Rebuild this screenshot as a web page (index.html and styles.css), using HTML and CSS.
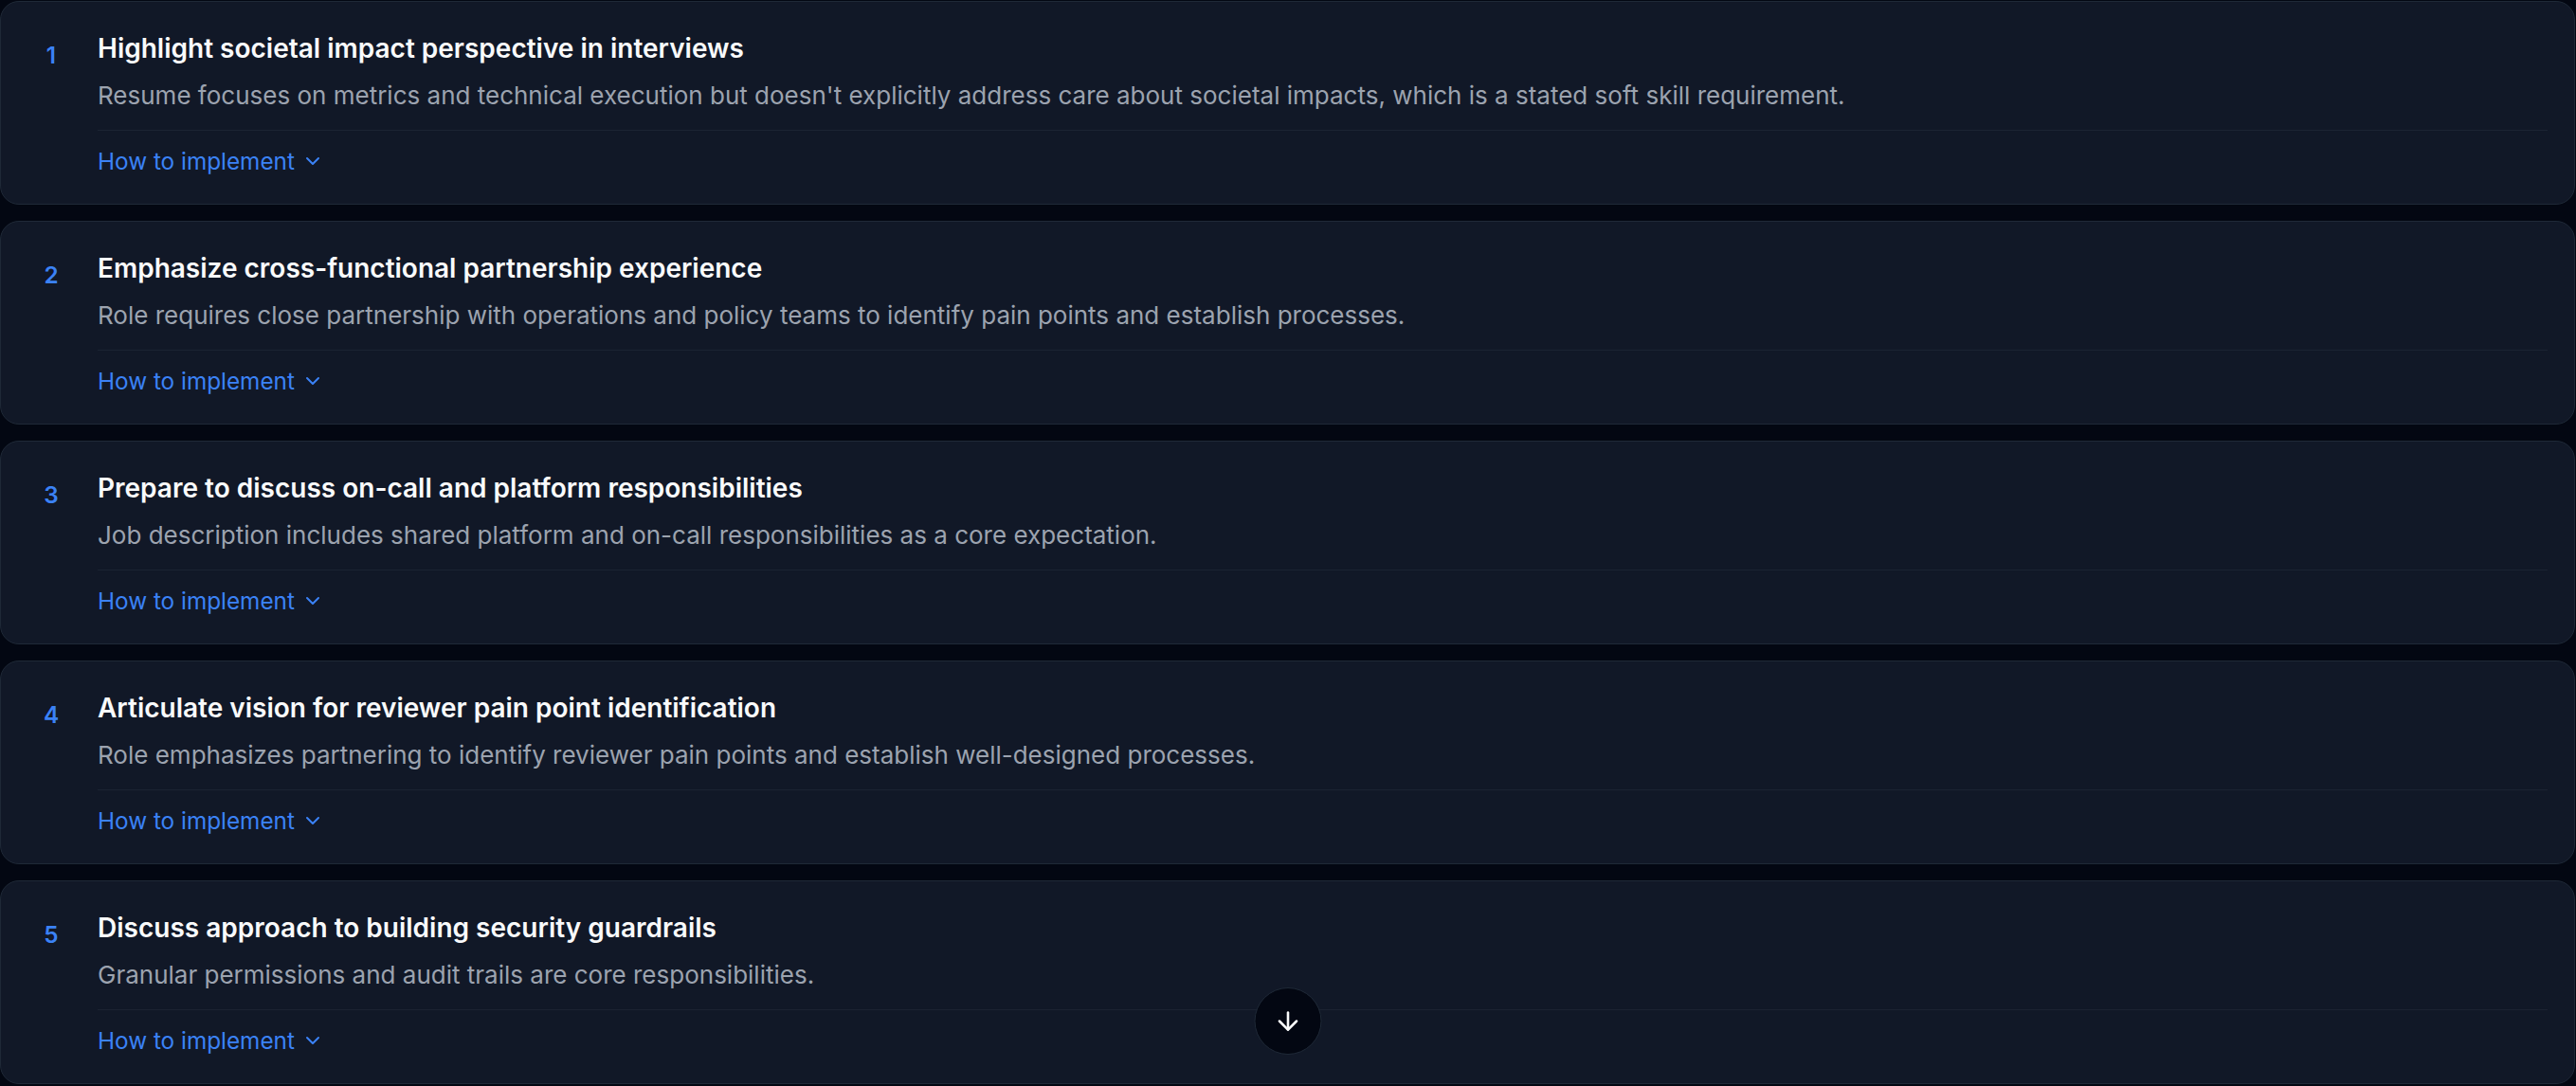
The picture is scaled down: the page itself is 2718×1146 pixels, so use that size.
FILE: index.html
```html
<!DOCTYPE html>
<html lang="en">
<head>
  <meta charset="UTF-8">
  <meta name="viewport" content="width=device-width, initial-scale=1.0">
  <title>Recommendations</title>
  <link rel="stylesheet" href="styles.css">
</head>
<body>
  <div class="list">
    <div class="card">
      <div class="num">1</div>
      <div class="body">
        <h3>Highlight societal impact perspective in interviews</h3>
        <p>Resume focuses on metrics and technical execution but doesn't explicitly address care about societal impacts, which is a stated soft skill requirement.</p>
        <div class="foot">
          <button class="toggle">How to implement
            <svg viewBox="0 0 24 24" fill="none" stroke="currentColor" stroke-width="2" stroke-linecap="round" stroke-linejoin="round"><path d="m6 9 6 6 6-6"/></svg>
          </button>
        </div>
      </div>
    </div>
    <div class="card">
      <div class="num">2</div>
      <div class="body">
        <h3>Emphasize cross-functional partnership experience</h3>
        <p>Role requires close partnership with operations and policy teams to identify pain points and establish processes.</p>
        <div class="foot">
          <button class="toggle">How to implement
            <svg viewBox="0 0 24 24" fill="none" stroke="currentColor" stroke-width="2" stroke-linecap="round" stroke-linejoin="round"><path d="m6 9 6 6 6-6"/></svg>
          </button>
        </div>
      </div>
    </div>
    <div class="card">
      <div class="num">3</div>
      <div class="body">
        <h3>Prepare to discuss on-call and platform responsibilities</h3>
        <p>Job description includes shared platform and on-call responsibilities as a core expectation.</p>
        <div class="foot">
          <button class="toggle">How to implement
            <svg viewBox="0 0 24 24" fill="none" stroke="currentColor" stroke-width="2" stroke-linecap="round" stroke-linejoin="round"><path d="m6 9 6 6 6-6"/></svg>
          </button>
        </div>
      </div>
    </div>
    <div class="card">
      <div class="num">4</div>
      <div class="body">
        <h3>Articulate vision for reviewer pain point identification</h3>
        <p>Role emphasizes partnering to identify reviewer pain points and establish well-designed processes.</p>
        <div class="foot">
          <button class="toggle">How to implement
            <svg viewBox="0 0 24 24" fill="none" stroke="currentColor" stroke-width="2" stroke-linecap="round" stroke-linejoin="round"><path d="m6 9 6 6 6-6"/></svg>
          </button>
        </div>
      </div>
    </div>
    <div class="card">
      <div class="num">5</div>
      <div class="body">
        <h3>Discuss approach to building security guardrails</h3>
        <p>Granular permissions and audit trails are core responsibilities.</p>
        <div class="foot">
          <button class="toggle">How to implement
            <svg viewBox="0 0 24 24" fill="none" stroke="currentColor" stroke-width="2" stroke-linecap="round" stroke-linejoin="round"><path d="m6 9 6 6 6-6"/></svg>
          </button>
        </div>
      </div>
    </div>
  </div>

  <button class="scroll-down" aria-label="Scroll down">
    <svg viewBox="0 0 24 24" fill="none" stroke="currentColor" stroke-width="2" stroke-linecap="round" stroke-linejoin="round"><path d="M12 5v14"/><path d="m19 12-7 7-7-7"/></svg>
  </button>
</body>
</html>
```

FILE: styles.css
```css
body {
  margin: 0;
  padding: 1px 1px 0 0;
  background-color: #030712;
  font-family: Inter, "Noto Sans", sans-serif;
  color: #f9fafb;
}
.list {
  display: flex;
  flex-direction: column;
  gap: 17px;
}
.card {
  display: flex;
  gap: 24px;
  background-color: #111827;
  border: 1px solid #1f2937;
  border-radius: 20px;
  padding: 29px 28px 27.7px 28px;
}
.num {
  width: 50px;
  flex-shrink: 0;
  margin-top: 10px;
  text-align: center;
  color: #3b82f6;
  font-size: 24.3px;
  line-height: 34.7px;
  font-weight: 600;
}
.body {
  flex: 1;
  min-width: 0;
}
.body h3 {
  margin: 0;
  font-size: 28px;
  line-height: 41.6px;
  font-weight: 600;
  color: #f9fafb;
}
.body p {
  margin: 8px 0 0;
  font-size: 26px;
  line-height: 39px;
  color: #9ca3af;
}
.foot {
  margin-top: 17px;
  padding-top: 15px;
  border-top: 1px solid #1b2332;
}
.toggle {
  display: flex;
  align-items: center;
  gap: 7px;
  padding: 0;
  background: none;
  border: none;
  color: #3b82f6;
  font-family: inherit;
  font-size: 24.3px;
  line-height: 34.7px;
  font-weight: 400;
  cursor: pointer;
}
.toggle svg {
  width: 24px;
  height: 24px;
}
.scroll-down {
  position: fixed;
  left: 50%;
  bottom: 33px;
  transform: translateX(-50%);
  width: 71px;
  height: 71px;
  border-radius: 50%;
  background-color: #030712;
  border: 1px solid #1f2937;
  color: #f9fafb;
  display: flex;
  align-items: center;
  justify-content: center;
  padding: 0;
  cursor: pointer;
}
.scroll-down svg {
  width: 31px;
  height: 31px;
}
```
